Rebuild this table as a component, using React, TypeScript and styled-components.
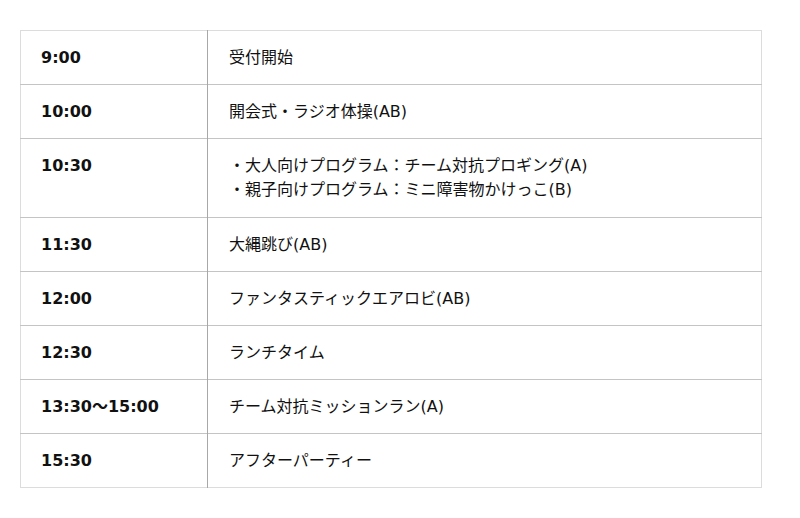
import React from "react";
import styled, { createGlobalStyle } from "styled-components";

const Global = createGlobalStyle`
  html, body { margin: 0; padding: 0; background: #fff; }
  body { font-family: "DejaVu Sans", "Noto Sans CJK JP", sans-serif; color: #111; }
`;

const Page = styled.div`
  padding: 30px 38px 30px 20px;
`;

const Table = styled.table`
  width: 742px;
  border-collapse: collapse;
  border: 1px solid #dcdcdc;
`;

const Row = styled.tr`
  border-bottom: 1px solid #c4c4c4;
  &:last-child { border-bottom: 1px solid #dcdcdc; }
`;

const TimeCell = styled.th`
  width: 146px;
  padding: 15px 20px 14px 20px;
  text-align: left;
  vertical-align: top;
  font-size: 16px;
  font-weight: bold;
  line-height: 24px;
  border-right: 1px solid #a8a8a8;
`;

const EventCell = styled.td<{ $multi?: boolean }>`
  padding: 15px 21px ${(p) => (p.$multi ? "15px" : "14px")} 21px;
  vertical-align: top;
  font-size: 16px;
  line-height: 24px;
`;

const Line = styled.div``;

const schedule: { time: string; items: string[] }[] = [
  { time: "9:00", items: ["受付開始"] },
  { time: "10:00", items: ["開会式・ラジオ体操(AB)"] },
  {
    time: "10:30",
    items: [
      "・大人向けプログラム：チーム対抗プロギング(A)",
      "・親子向けプログラム：ミニ障害物かけっこ(B)",
    ],
  },
  { time: "11:30", items: ["大縄跳び(AB)"] },
  { time: "12:00", items: ["ファンタスティックエアロビ(AB)"] },
  { time: "12:30", items: ["ランチタイム"] },
  { time: "13:30〜15:00", items: ["チーム対抗ミッションラン(A)"] },
  { time: "15:30", items: ["アフターパーティー"] },
];

export default function App() {
  return (
    <Page>
      <Global />
      <Table>
        <tbody>
          {schedule.map((s) => (
            <Row key={s.time}>
              <TimeCell>{s.time}</TimeCell>
              <EventCell $multi={s.items.length > 1}>
                {s.items.map((it) => (
                  <Line key={it}>{it}</Line>
                ))}
              </EventCell>
            </Row>
          ))}
        </tbody>
      </Table>
    </Page>
  );
}
